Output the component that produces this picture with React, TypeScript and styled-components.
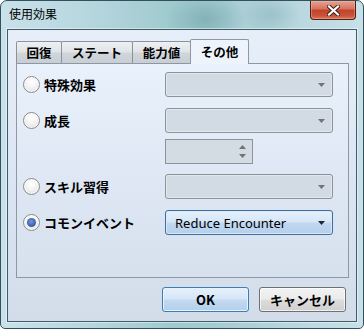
import React from 'react';
import styled, { createGlobalStyle, css } from 'styled-components';

const FONT = `"Noto Sans CJK JP", "Noto Sans", sans-serif`;

const Global = createGlobalStyle`
  html, body { margin: 0; padding: 0; background: #ffffff; }
  body { width: 364px; height: 329px; overflow: hidden; }
  * { box-sizing: border-box; }
`;

const Window = styled.div`
  width: 364px;
  height: 329px;
  display: flex;
  flex-direction: column;
  border: 1px solid #34505a;
  border-radius: 7px 7px 5px 5px;
  overflow: hidden;
  font-family: ${FONT};
  background:
    radial-gradient(ellipse 40px 26px at 205px 18px, rgba(70, 130, 135, 0.35), transparent),
    radial-gradient(ellipse 30px 20px at 270px 14px, rgba(90, 140, 150, 0.25), transparent),
    linear-gradient(to right, #c9e1ea 0%, #b6d6de 25%, #9ecacd 48%, #a6cdd3 62%, #bad7df 82%, #c8e0e8 100%);
`;

const TitleBar = styled.div`
  height: 28px;
  display: flex;
  justify-content: space-between;
  align-items: flex-start;
  flex-shrink: 0;
`;

const Title = styled.div`
  padding: 5px 0 0 8px;
  font-size: 12px;
  line-height: 16px;
  color: #000;
`;

const CloseButton = styled.div`
  width: 46px;
  height: 19px;
  margin-right: 7px;
  border: 1px solid #4f1e16;
  border-top: none;
  border-radius: 0 0 4px 4px;
  display: flex;
  align-items: center;
  justify-content: center;
  background: linear-gradient(to bottom, #e8a090 0%, #d87560 42%, #c0432c 52%, #c85238 80%, #d9785c 100%);
  box-shadow: inset 0 0 0 1px rgba(255, 200, 180, 0.35);
`;

const Client = styled.div`
  margin: 0 6px;
  height: 293px;
  display: flex;
  flex-direction: column;
  border: 1px solid #3f5c68;
  box-shadow: 0 0 0 1px rgba(255, 255, 255, 0.45);
  background: linear-gradient(to bottom, #e6eef9 0%, #dce6f2 50%, #d3dde9 100%);
  padding: 9px 0 0 8px;
`;

const TabStrip = styled.div`
  display: flex;
  align-items: flex-end;
  height: 24px;
  position: relative;
  z-index: 1;
`;

const Tab = styled.div<{ $w: number; $active?: boolean }>`
  width: ${(p) => p.$w}px;
  height: 22px;
  margin-right: -1px;
  border: 1px solid #8a939c;
  border-bottom: none;
  border-radius: 2px 2px 0 0;
  display: flex;
  align-items: center;
  justify-content: center;
  font-size: 12.5px;
  font-weight: bold;
  color: #000;
  background: linear-gradient(to bottom, #eef0f2 0%, #e1e4e8 45%, #d0d5da 55%, #c9ced4 100%);
  ${(p) =>
    p.$active &&
    css`
      height: 25px;
      margin-bottom: -1px;
      padding-bottom: 2px;
      background: #eef4fc;
      border-color: #8c98a4;
    `}
`;

const Panel = styled.div`
  width: 333px;
  height: 215px;
  border: 1px solid #8c98a4;
  background: linear-gradient(to bottom, #e9f1fc 0%, #dfe8f4 50%, #d6e1ed 100%);
  padding: 8px 0 0 6px;
  display: flex;
  flex-direction: column;
`;

const Row = styled.div<{ $h: number; $mt: number }>`
  display: flex;
  align-items: center;
  height: ${(p) => p.$h}px;
  margin-top: ${(p) => p.$mt}px;
`;

const LabelArea = styled.div`
  width: 142px;
  display: flex;
  align-items: center;
  gap: 4px;
  font-size: 13px;
  font-weight: bold;
  color: #000;
`;

const Radio = styled.div<{ $checked?: boolean }>`
  width: 17px;
  height: 17px;
  border-radius: 50%;
  border: 1px solid #8a8a8a;
  background: radial-gradient(circle at 50% 35%, #ffffff 0%, #f3f3f3 45%, #d9d9d9 100%);
  box-shadow: inset 0 0 0 1px rgba(255, 255, 255, 0.8);
  display: flex;
  align-items: center;
  justify-content: center;
  flex-shrink: 0;
  &::after {
    content: '';
    display: ${(p) => (p.$checked ? 'block' : 'none')};
    width: 9px;
    height: 9px;
    border-radius: 50%;
    background: radial-gradient(circle at 45% 40%, #7797d6 0%, #3c62ad 60%, #2a4c92 100%);
  }
`;

const Combo = styled.div<{ $enabled?: boolean }>`
  width: 168px;
  height: 100%;
  border: 1px solid #8b939b;
  border-radius: 3px;
  background: #d2dae3;
  box-shadow: inset 0 0 0 1px rgba(255, 255, 255, 0.35);
  display: flex;
  align-items: center;
  justify-content: space-between;
  padding: 0 7px 0 9px;
  font-family: "Noto Sans", sans-serif;
  font-size: 13px;
  color: #000;
  ${(p) =>
    p.$enabled &&
    css`
      border-color: #3f6f9f;
      box-shadow: inset 0 0 0 1px #d7e8f8;
      background: linear-gradient(to bottom, #e6f0fb 0%, #d5e6f7 48%, #c0d8f0 52%, #b5d0ec 100%);
    `}
`;

const SpinBox = styled.div`
  width: 88px;
  height: 100%;
  border: 1px solid #8b939b;
  background: #d3dbe3;
  display: flex;
  justify-content: flex-end;
  align-items: center;
  padding-right: 6px;
`;

const SpinArrows = styled.div`
  display: flex;
  flex-direction: column;
  gap: 5px;
`;

const ButtonRow = styled.div`
  display: flex;
  justify-content: flex-end;
  gap: 10px;
  padding-right: 10px;
  margin-top: 9px;
`;

const Button = styled.div<{ $default?: boolean }>`
  width: 87px;
  height: 25px;
  border-radius: 3px;
  display: flex;
  align-items: center;
  justify-content: center;
  font-size: 13px;
  font-weight: bold;
  color: #000;
  border: 1px solid #707070;
  box-shadow: inset 0 0 0 1px rgba(255, 255, 255, 0.7);
  background: linear-gradient(to bottom, #f2f2f2 0%, #ebebeb 48%, #dddddd 52%, #cfcfcf 100%);
  ${(p) =>
    p.$default &&
    css`
      border-color: #3c7fb1;
      box-shadow: inset 0 0 0 1px #e6f2fc;
      background: linear-gradient(to bottom, #e6f0fb 0%, #d6e6f7 48%, #c3daf1 52%, #b4cfeb 100%);
    `}
`;

const Arrow = ({ up, color }: { up?: boolean; color: string }) => (
  <svg width="7" height="4" viewBox="0 0 7 4">
    <polygon points={up ? '0,4 7,4 3.5,0' : '0,0 7,0 3.5,4'} fill={color} />
  </svg>
);

const CloseX = () => (
  <svg width="13" height="11" viewBox="0 0 13 11">
    <path d="M2 1.5 L11 9.5 M11 1.5 L2 9.5" stroke="#3a1d18" strokeWidth="4" strokeLinecap="square" />
    <path d="M2 1.5 L11 9.5 M11 1.5 L2 9.5" stroke="#ffffff" strokeWidth="2.2" strokeLinecap="square" />
  </svg>
);

export default function App() {
  return (
    <>
      <Global />
      <Window>
        <TitleBar>
          <Title>使用効果</Title>
          <CloseButton>
            <CloseX />
          </CloseButton>
        </TitleBar>
        <Client>
          <TabStrip>
            <Tab $w={46}>回復</Tab>
            <Tab $w={72}>ステート</Tab>
            <Tab $w={59}>能力値</Tab>
            <Tab $w={59} $active>
              その他
            </Tab>
          </TabStrip>
          <Panel>
            <Row $h={25} $mt={0}>
              <LabelArea>
                <Radio />
                特殊効果
              </LabelArea>
              <Combo>
                <span />
                <Arrow color="#6e747a" />
              </Combo>
            </Row>
            <Row $h={25} $mt={11}>
              <LabelArea>
                <Radio />
                成長
              </LabelArea>
              <Combo>
                <span />
                <Arrow color="#6e747a" />
              </Combo>
            </Row>
            <Row $h={25} $mt={6}>
              <LabelArea />
              <SpinBox>
                <SpinArrows>
                  <Arrow up color="#6e747a" />
                  <Arrow color="#6e747a" />
                </SpinArrows>
              </SpinBox>
            </Row>
            <Row $h={25} $mt={10}>
              <LabelArea>
                <Radio />
                スキル習得
              </LabelArea>
              <Combo>
                <span />
                <Arrow color="#6e747a" />
              </Combo>
            </Row>
            <Row $h={25} $mt={11}>
              <LabelArea>
                <Radio $checked />
                コモンイベント
              </LabelArea>
              <Combo $enabled>
                <span>Reduce Encounter</span>
                <Arrow color="#1c2a3a" />
              </Combo>
            </Row>
          </Panel>
          <ButtonRow>
            <Button $default>OK</Button>
            <Button>キャンセル</Button>
          </ButtonRow>
        </Client>
      </Window>
    </>
  );
}
